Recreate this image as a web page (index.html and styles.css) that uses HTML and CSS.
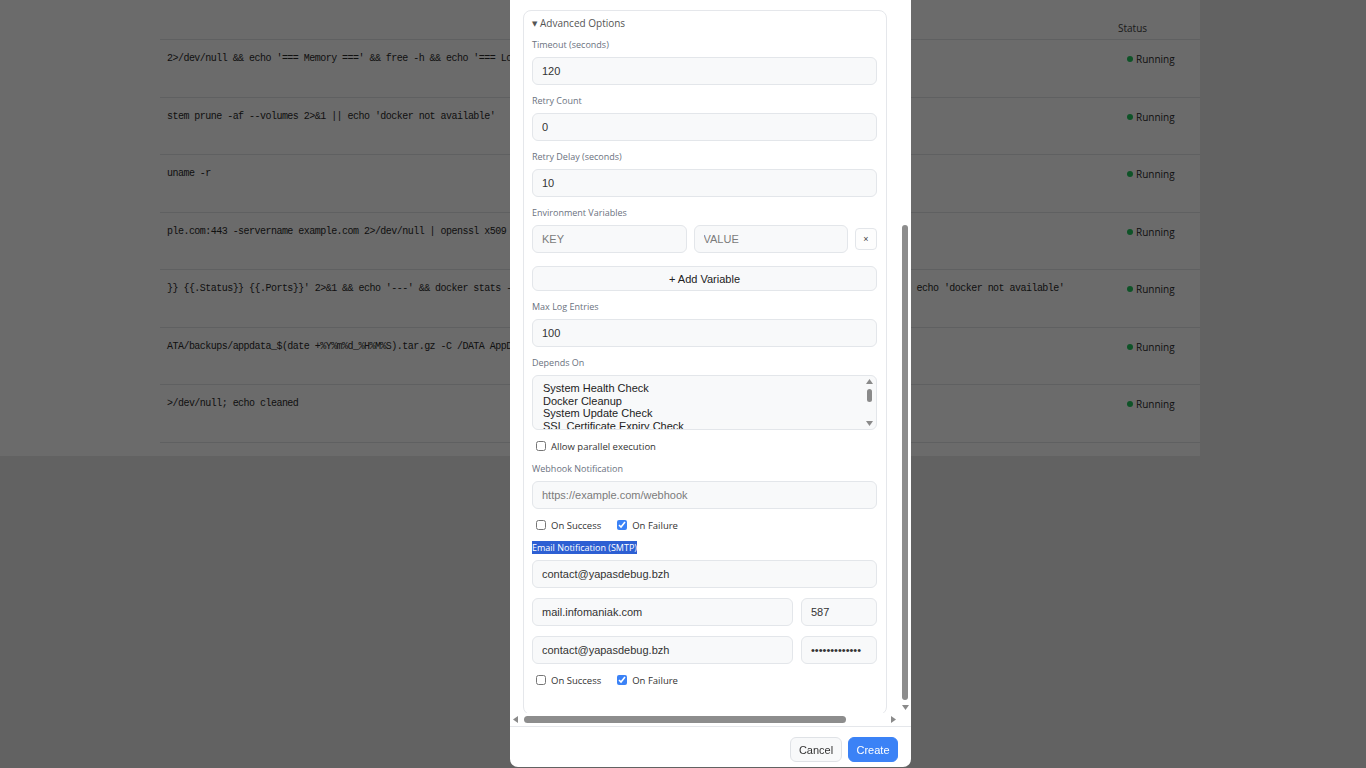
FILE: index.html
```html
<!DOCTYPE html>
<html lang="en">
<head>
  <meta charset="UTF-8">
  <meta name="viewport" content="width=device-width, initial-scale=1.0">
  <title>Scheduled Jobs</title>
  <link rel="stylesheet" href="styles.css">
</head>
<body>
  <div class="jobs-card">
    <div class="jobs-row jobs-head">
      <div class="cmd"></div>
      <div class="status">Status</div>
    </div>
    <div class="jobs-row">
      <div class="cmd">2&gt;/dev/null &amp;&amp; echo '=== Memory ===' &amp;&amp; free -h &amp;&amp; echo '=== Load ===' &amp;&amp; uptime</div>
      <div class="status"><span class="dot"></span>Running</div>
    </div>
    <div class="jobs-row">
      <div class="cmd">stem prune -af --volumes 2&gt;&amp;1 || echo 'docker not available'</div>
      <div class="status"><span class="dot"></span>Running</div>
    </div>
    <div class="jobs-row">
      <div class="cmd">uname -r</div>
      <div class="status"><span class="dot"></span>Running</div>
    </div>
    <div class="jobs-row">
      <div class="cmd">ple.com:443 -servername example.com 2&gt;/dev/null | openssl x509 -noout -enddate</div>
      <div class="status"><span class="dot"></span>Running</div>
    </div>
    <div class="jobs-row">
      <div class="cmd">}} {{.Status}} {{.Ports}}' 2&gt;&amp;1 &amp;&amp; echo '---' &amp;&amp; docker stats --no-stream --format 'table {{.Name}}\t{{.CPUPerc}}\t{{.MemPerc}}' 2&gt;&amp;1 || echo 'docker not available'</div>
      <div class="status"><span class="dot"></span>Running</div>
    </div>
    <div class="jobs-row">
      <div class="cmd">ATA/backups/appdata_$(date +%Y%m%d_%H%M%S).tar.gz -C /DATA AppData</div>
      <div class="status"><span class="dot"></span>Running</div>
    </div>
    <div class="jobs-row">
      <div class="cmd">&gt;/dev/null; echo cleaned</div>
      <div class="status"><span class="dot"></span>Running</div>
    </div>
  </div>

  <div class="backdrop"></div>

  <div class="modal">
    <div class="modal-scroll">
      <div class="modal-body">
        <div class="advanced">
          <div class="advanced-title"><span class="caret">&#9660;</span> Advanced Options</div>

          <div class="field-label">Timeout (seconds)</div>
          <input class="text-input" type="text" value="120">

          <div class="field-label">Retry Count</div>
          <input class="text-input" type="text" value="0">

          <div class="field-label">Retry Delay (seconds)</div>
          <input class="text-input" type="text" value="10">

          <div class="field-label">Environment Variables</div>
          <div class="env-row">
            <input class="text-input" type="text" placeholder="KEY">
            <input class="text-input" type="text" placeholder="VALUE">
            <button class="remove-btn">&times;</button>
          </div>
          <button class="add-var">+ Add Variable</button>

          <div class="field-label">Max Log Entries</div>
          <input class="text-input" type="text" value="100">

          <div class="field-label">Depends On</div>
          <div class="depends">
            <div class="depends-list">
              <div>System Health Check</div>
              <div>Docker Cleanup</div>
              <div>System Update Check</div>
              <div>SSL Certificate Expiry Check</div>
            </div>
            <div class="depends-bar">
              <svg width="7" height="5" viewBox="0 0 7 5"><path d="M3.5 0L7 5H0z" fill="#8a8a8a"/></svg>
              <div class="depends-thumb"></div>
              <svg class="down" width="7" height="5" viewBox="0 0 7 5"><path d="M0 0h7L3.5 5z" fill="#8a8a8a"/></svg>
            </div>
          </div>

          <div class="check-row">
            <label><input type="checkbox"> Allow parallel execution</label>
          </div>

          <div class="field-label">Webhook Notification</div>
          <input class="text-input" type="text" placeholder="https://example.com/webhook">

          <div class="check-row">
            <label><input type="checkbox"> On Success</label>
            <label><input type="checkbox" checked> On Failure</label>
          </div>

          <div class="field-label"><span class="selected">Email Notification (SMTP)</span></div>
          <input class="text-input" type="text" value="contact@yapasdebug.bzh">
          <div class="pair">
            <input class="text-input" type="text" value="mail.infomaniak.com">
            <input class="text-input short" type="text" value="587">
          </div>
          <div class="pair">
            <input class="text-input" type="text" value="contact@yapasdebug.bzh">
            <input class="text-input short" type="password" value="smtppassword1">
          </div>

          <div class="check-row">
            <label><input type="checkbox"> On Success</label>
            <label><input type="checkbox" checked> On Failure</label>
          </div>
        </div>
      </div>

      <!-- scrollbars of the form body -->
      <div class="vbar">
        <div class="vbar-thumb"></div>
        <svg width="7" height="5" viewBox="0 0 7 5"><path d="M0 0h7L3.5 5z" fill="#8a8a8a"/></svg>
      </div>
      <div class="hbar">
        <svg width="5" height="7" viewBox="0 0 5 7"><path d="M5 0v7L0 3.5z" fill="#8a8a8a"/></svg>
        <div class="hbar-thumb"></div>
        <svg class="right" width="5" height="7" viewBox="0 0 5 7"><path d="M0 0l5 3.5L0 7z" fill="#8a8a8a"/></svg>
      </div>
      <div class="corner"></div>
    </div>

    <div class="modal-footer">
      <button class="btn btn-cancel">Cancel</button>
      <button class="btn btn-primary">Create</button>
    </div>
  </div>
</body>
</html>
```

FILE: styles.css
```css
body {
  margin: 0;
  height: 768px;
  overflow: hidden;
  background-color: #e9e9e9;
  font-family: "Open Sans", Arial, sans-serif;
}

/* jobs table behind the dialog (scrolled sideways) */
.jobs-card {
  width: 1200px;
  box-sizing: border-box;
  padding: 0 0 13px 160px;
  background-color: #fff;
}
.jobs-row {
  display: flex;
  height: 57.5px;
  box-sizing: border-box;
  border-bottom: 1px solid #e2e4e8;
}
.jobs-head {
  height: 40px;
}
.cmd {
  flex: 1;
  min-width: 0;
  overflow: hidden;
  white-space: nowrap;
  padding: 13px 0 0 7px;
  font: 10px/12px "Liberation Mono", monospace;
  letter-spacing: -0.53px;
  color: #2a2a2a;
}
.status {
  width: 90px;
  box-sizing: border-box;
  padding: 13px 0 0 17px;
  height: 25px;
  display: flex;
  align-items: center;
  gap: 3px;
  font-size: 10px;
  line-height: 12px;
  color: #2c2c2c;
}
.jobs-head .status {
  padding: 22px 0 0 8px;
  height: 34px;
  color: #444;
}
.dot {
  width: 6px;
  height: 6px;
  border-radius: 50%;
  background-color: #22c55e;
}

.backdrop {
  position: fixed;
  top: 0;
  left: 0;
  right: 0;
  bottom: 0;
  background-color: rgba(0, 0, 0, 0.58);
}

/* dialog */
.modal {
  position: fixed;
  left: 510px;
  top: -10px;
  width: 401px;
  height: 777px;
  background-color: #fff;
  border-radius: 8px;
  display: flex;
  flex-direction: column;
  overflow: hidden;
}
.modal-scroll {
  flex: 1;
  min-height: 0;
  display: grid;
  grid-template-columns: 1fr 11px;
  grid-template-rows: 1fr 13px;
}
.modal-body {
  overflow: hidden;
  padding: 20px 0 0 13px;
}
.advanced {
  width: 364px;
  box-sizing: border-box;
  border: 1px solid #e5e7eb;
  border-radius: 8px;
  padding: 6px 9px 17px 8px;
}
.advanced-title {
  font-size: 10px;
  line-height: 12px;
  color: #555;
  margin-bottom: 9px;
}
.caret {
  font-family: "DejaVu Sans", sans-serif;
  font-size: 7px;
  vertical-align: 1px;
}
.field-label {
  font-size: 9px;
  line-height: 12px;
  color: #6b7280;
  margin-bottom: 6px;
}
.selected {
  background-color: #2d5fd3;
  color: #fff;
}
.text-input {
  display: block;
  width: 100%;
  height: 28px;
  box-sizing: border-box;
  margin: 0 0 10px;
  padding: 0 9px;
  border: 1px solid #e3e6ea;
  border-radius: 6px;
  background-color: #f8f9fa;
  font: 11px "Liberation Sans", Arial, sans-serif;
  color: #333;
  outline: none;
}
.text-input::placeholder {
  color: #7b7b7b;
}
.env-row {
  display: flex;
  align-items: center;
  gap: 7px;
  margin-bottom: 13px;
}
.env-row .text-input {
  flex: 1;
  min-width: 0;
  margin: 0;
}
.remove-btn {
  width: 22px;
  height: 22px;
  padding: 0;
  flex-shrink: 0;
  border: 1px solid #e3e6ea;
  border-radius: 4px;
  background-color: #fdfdfd;
  font: 9px "Liberation Sans", Arial, sans-serif;
  color: #444;
}
.add-var {
  display: block;
  width: 100%;
  height: 25px;
  margin-bottom: 10px;
  border: 1px solid #e3e6ea;
  border-radius: 6px;
  background-color: #f8f9fa;
  font: 11px "Liberation Sans", Arial, sans-serif;
  color: #222;
}

/* multi select for dependencies */
.depends {
  display: flex;
  height: 55px;
  box-sizing: border-box;
  margin-bottom: 10px;
  border: 1px solid #e3e6ea;
  border-radius: 6px;
  background-color: #f8f9fa;
}
.depends-list {
  flex: 1;
  overflow: hidden;
  padding: 6px 0 0 10px;
  font: 11px/12.5px "Liberation Sans", Arial, sans-serif;
  color: #222;
}
.depends-bar {
  width: 11px;
  display: flex;
  flex-direction: column;
  align-items: center;
  padding: 3px 1px 3px 0;
}
.depends-thumb {
  width: 5px;
  height: 13px;
  margin-top: 5px;
  border-radius: 3px;
  background-color: #8a8a8a;
}
.depends-bar .down {
  margin-top: auto;
}

.check-row {
  display: flex;
  align-items: center;
  height: 12px;
  margin-bottom: 11px;
  padding-left: 4px;
  font-size: 9.5px;
  color: #333;
}
.check-row label {
  display: flex;
  align-items: center;
  gap: 5px;
  margin-right: 16px;
}
.check-row input {
  width: 10px;
  height: 10px;
  margin: 0;
  accent-color: #3b82f6;
}
.pair {
  display: flex;
  gap: 8px;
}
.pair .text-input {
  flex: 1;
  min-width: 0;
}
.pair .short {
  flex: 0 0 76px;
}

/* fake scrollbars */
.vbar {
  display: flex;
  flex-direction: column;
  align-items: center;
  padding-right: 1px;
}
.vbar-thumb {
  width: 6px;
  height: 475px;
  margin: 235px 0 5px;
  border-radius: 3px;
  background-color: #8d8d8d;
}
.hbar {
  display: flex;
  align-items: center;
  padding: 0 4px 0 3px;
}
.hbar-thumb {
  width: 322px;
  height: 7px;
  margin-left: 6px;
  border-radius: 4px;
  background-color: #8d8d8d;
}
.hbar .right {
  margin-left: auto;
}

.modal-footer {
  height: 41px;
  box-sizing: border-box;
  border-top: 1px solid #e5e7eb;
  display: flex;
  justify-content: flex-end;
  gap: 6px;
  padding: 10px 13px 0 0;
}
.btn {
  height: 25px;
  padding: 0;
  border: 1px solid #dfe2e6;
  border-radius: 6px;
  background-color: #f8f9fa;
  font: 11px "Liberation Sans", Arial, sans-serif;
  color: #333;
}
.btn-cancel {
  width: 52px;
}
.btn-primary {
  width: 50px;
  border-color: #3b82f6;
  background-color: #3b82f6;
  color: #fff;
}
```
